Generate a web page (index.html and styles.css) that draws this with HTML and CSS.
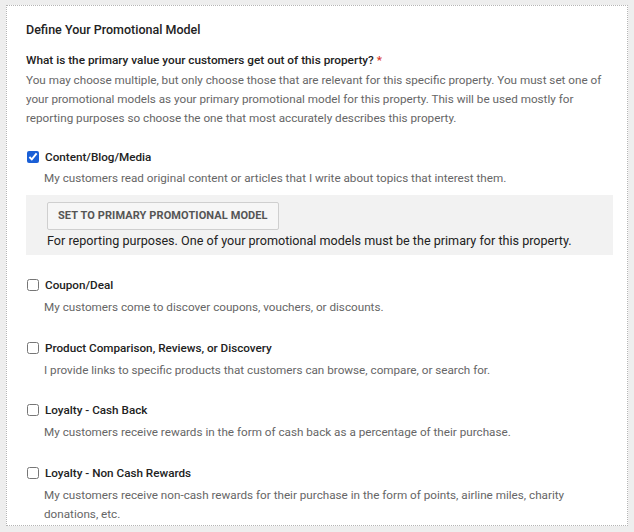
FILE: index.html
```html
<!DOCTYPE html>
<html>
<head>
<meta charset="utf-8">
<link rel="stylesheet" href="styles.css">
</head>
<body>
<div class="panel">
  <h2 class="title">Define Your Promotional Model</h2>
  <div class="question">What is the primary value your customers get out of this property? <span class="req">*</span></div>
  <p class="help">You may choose multiple, but only choose those that are relevant for this specific property. You must set one of your promotional models as your primary promotional model for this property. This will be used mostly for reporting purposes so choose the one that most accurately describes this property.</p>

  <div class="option first">
    <label class="opt-label"><input type="checkbox" checked> <span>Content/Blog/Media</span></label>
    <div class="opt-desc">My customers read original content or articles that I write about topics that interest them.</div>
    <div class="primary-box">
      <button class="btn">SET TO PRIMARY PROMOTIONAL MODEL</button>
      <div class="primary-note">For reporting purposes. One of your promotional models must be the primary for this property.</div>
    </div>
  </div>

  <div class="option">
    <label class="opt-label"><input type="checkbox"> <span>Coupon/Deal</span></label>
    <div class="opt-desc">My customers come to discover coupons, vouchers, or discounts.</div>
  </div>

  <div class="option">
    <label class="opt-label"><input type="checkbox"> <span>Product Comparison, Reviews, or Discovery</span></label>
    <div class="opt-desc">I provide links to specific products that customers can browse, compare, or search for.</div>
  </div>

  <div class="option">
    <label class="opt-label"><input type="checkbox"> <span>Loyalty - Cash Back</span></label>
    <div class="opt-desc">My customers receive rewards in the form of cash back as a percentage of their purchase.</div>
  </div>

  <div class="option">
    <label class="opt-label"><input type="checkbox"> <span>Loyalty - Non Cash Rewards</span></label>
    <div class="opt-desc">My customers receive non-cash rewards for their purchase in the form of points, airline miles, charity donations, etc.</div>
  </div>
</div>
</body>
</html>
```

FILE: styles.css
```css
html, body {
  margin: 0;
  padding: 0;
}
body {
  background: #eeeeee;
  font-family: Roboto, "Liberation Sans", Arial, sans-serif;
  padding: 5px 6px 0 6px;
  height: 532px;
  box-sizing: border-box;
  overflow: hidden;
}
.panel {
  background: #ffffff;
  border: 1px dotted #b5b5b5;
  padding: 15px 8px 20px 19px;
  height: 521px;
  box-sizing: border-box;
  overflow: hidden;
}
.title {
  margin: 0;
  font-size: 12.5px;
  font-weight: 500;
  color: #222;
  line-height: 18px;
}
.question {
  margin-top: 12px;
  font-size: 11.8px;
  font-weight: 500;
  color: #222;
  line-height: 18px;
}
.req {
  color: #d9362b;
}
.help {
  margin: 1.5px 14px 0 0;
  font-size: 11.7px;
  color: #666;
  line-height: 19px;
}
.option {
  margin-top: 21.5px;
}
.option.first {
  margin-top: 20px;
}
.opt-label {
  display: flex;
  align-items: center;
  font-size: 11.7px;
  font-weight: 500;
  color: #222;
  line-height: 18px;
}
.opt-label input {
  margin: 0 6px 0 1px;
  width: 12px;
  height: 12px;
  accent-color: #1a5fd6;
}
.opt-desc {
  margin: 4px 6px 0 18px;
  font-size: 11.7px;
  color: #666;
  line-height: 19px;
}
.first .opt-desc {
  margin-top: 3px;
}
.primary-box {
  margin: 7px 6px 0 0;
  background: #f2f2f2;
  padding: 7px 21px 5px 21px;
}
.btn {
  display: block;
  font-family: Roboto, "Liberation Sans", Arial, sans-serif;
  font-size: 11px;
  font-weight: 700;
  color: #555;
  background: #f6f6f6;
  border: 1px solid #cfcfcf;
  border-radius: 2px;
  padding: 0 10px;
  height: 28px;
  letter-spacing: 0.1px;
}
.primary-note {
  margin-top: 2px;
  font-size: 12.6px;
  color: #222;
  line-height: 18px;
}
```
